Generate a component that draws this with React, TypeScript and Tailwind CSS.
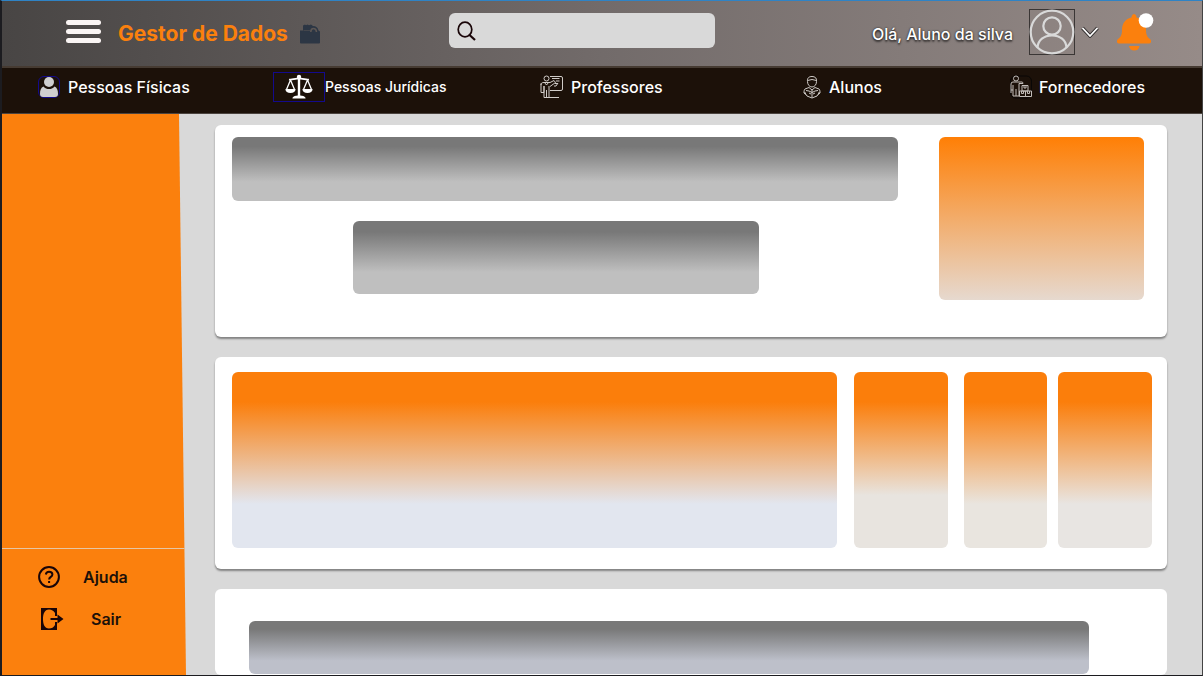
import type { ReactNode } from "react";

function PersonIcon() {
  return (
    <span className="flex h-[22px] w-[22px] shrink-0 rounded-md border border-[#130a8c]">
      <svg viewBox="0 0 20 20" className="h-5 w-5" fill="#cfcfd0" aria-hidden="true">
        <circle cx="10" cy="5" r="5" />
        <path d="M4.500 9.500C6 11.400 8 12 10 12s4-.6 5.500-2.500C18 10.500 19 13 19 17c0 2-1 3-3 3H4c-2 0-3-1-3-3 0-4 1-6.500 3.500-7.500Z" />
      </svg>
    </span>
  );
}

function ScalesIcon() {
  return (
    <span className="flex h-[30px] w-[52px] shrink-0 items-center justify-center border border-[#130a8c]">
      <svg viewBox="0 0 28 26" className="h-[26px] w-7" fill="#fff" aria-hidden="true">
        <circle cx="14" cy="3" r="2.200" />
        <rect x="12.800" y="3" width="2.400" height="20" />
        <path d="M7.500 23.800c1-1.700 3-2 5.300-2.300h2.400c2.300.3 4.300.6 5.300 2.300v.8h-13Z" />
        <path d="M4 5.500c3 .8 5-.8 8-.8h4c3 0 5 1.600 8 .8" fill="none" stroke="#fff" strokeWidth="1.800" />
        <path d="M5.500 6 1.500 15.500M5.500 6l4 9.500M22.500 6l-4 9.500M22.500 6l4 9.500" stroke="#fff" strokeWidth="1.300" />
        <path d="M.4 15h10.200c0 2.500-2.200 4-5.100 4S.4 17.500.4 15ZM17.400 15h10.200c0 2.500-2.200 4-5.100 4s-5.100-1.500-5.100-4Z" />
      </svg>
    </span>
  );
}

function TeacherIcon() {
  return (
    <svg viewBox="0 0 24 24" className="h-6 w-6 shrink-0" fill="none" stroke="#d0ccc8" strokeWidth="1" aria-hidden="true">
      <circle cx="6.500" cy="3.500" r="2.500" />
      <path d="M1 8.500v9h3V11M4 11v11.500h5V11M6.500 15v7.500M1 10C1 8 2 7.500 4 7.500h6l4-2 1.500 2-5.500 4M4.500 7.500l2 2.500 2-2.500" />
      <path d="M10 1.500h11q1.500 0 1.500 1.500v11q0 1.500-1.500 1.500H10M9 22.500h10" />
      <path d="M12 3.500h7.500M16 6h3.500M15 8.500h3M14 11h2l2-3" />
    </svg>
  );
}

function StudentIcon() {
  return (
    <svg viewBox="0 0 18 24" className="h-6 w-[18px] shrink-0" fill="none" stroke="#d0ccc8" strokeWidth="1" aria-hidden="true">
      <path d="M4.500 6.500C4 3 6 1.500 9 1.500s5 1.500 4.500 5c0 3-1.800 5.500-4.500 5.500S4.500 9.500 4.500 6.500ZM4.500 5.500q4.500-2 9 0" />
      <path d="m9 15-3-2.500-4 1.500c-1 1-1 2.500-1 4h2M9 15l3-2.500 4 1.500c1 1 1 2.500 1 4h-2" />
      <path d="M9 15v7.500M3 15.500l3 .5 3 1.500 3-1.500 3-.5M2 18l2 3 5 2 5-2 2-3M1 18l2 1.500M17 18l-2 1.500M6 18l2 1M12 18l-2 1" />
    </svg>
  );
}

function SupplierIcon() {
  return (
    <svg viewBox="0 0 22 24" className="h-6 w-[22px] shrink-0" fill="none" stroke="#c2bdb9" strokeWidth="1" aria-hidden="true">
      <rect x=".5" y="1" width="21" height="22" rx="5" stroke="#090706" />
      <circle cx="6" cy="3.500" r="2.500" />
      <path d="M1 18V9q0-2 2-2h9q1 0 1 1.500H9V21H3V10M6 14v7M1 15h2" />
      <path d="M12 10.500h6V16h-6ZM14 10.500V13h2v-2.500M9.500 16h6v5.500h-6ZM15.500 16h6v5.500h-6ZM11.500 16v2.500h2V16M17.500 16v2.500h2V16" />
    </svg>
  );
}

function FolderIcon() {
  return (
    <svg viewBox="0 0 20 20" className="h-5 w-5 shrink-0" fill="#2c3644" aria-hidden="true">
      <path d="M0 6.500h3V1.500L5 .5l1 .7 1.500-.7 1.500.7L11 .5l2 1.500c3 0 5 1.500 5.500 4.500l1.500 1v11q0 1-1 1H1q-1 0-1-1Z" />
      <path d="M10.800 8q0-3.500 2.700-3.500T16.500 8" fill="none" stroke="#5c5654" strokeWidth="1.500" />
      <path d="M3.500 6.500h7" stroke="#5c5654" strokeWidth=".5" />
    </svg>
  );
}

type Item = { label: string; icon: ReactNode; className: string };

const navItems: Item[] = [
  { label: "Pessoas Físicas", icon: <PersonIcon />, className: "gap-2 text-base" },
  { label: "Pessoas Jurídicas", icon: <ScalesIcon />, className: "text-sm" },
  { label: "Professores", icon: <TeacherIcon />, className: "gap-[7px] text-base" },
  { label: "Alunos", icon: <StudentIcon />, className: "gap-2 text-base" },
  { label: "Fornecedores", icon: <SupplierIcon />, className: "gap-[7px] text-base" },
];

function Header() {
  return (
    <header className="grid h-[65px] grid-cols-[minmax(0,447fr)_minmax(0,266fr)_minmax(0,487fr)] bg-linear-to-r/srgb from-[#484544] via-[#726b6a] to-[#968b88] pb-1">
      <div className="flex items-center pl-16">
        <button type="button" aria-label="Menu" className="flex w-[35px] flex-col gap-1">
          <span className="h-[5px] rounded-full bg-[#faf5f4]" />
          <span className="h-[5px] rounded-full bg-[#faf5f4]" />
          <span className="h-[5px] rounded-full bg-[#faf5f4]" />
        </button>
        <div className="flex items-center gap-3 pl-[17px] pt-1">
          <h1 className="whitespace-nowrap text-[21px] font-bold text-[#fb800d]">Gestor de Dados</h1>
          <FolderIcon />
        </div>
      </div>
      <label className="mt-3 flex h-[35px] items-center rounded-md bg-[#d9d9d9] pl-2">
        <svg viewBox="0 0 20 20" className="h-5 w-5 shrink-0" fill="none" stroke="#190508" aria-hidden="true">
          <ellipse cx="8" cy="8.500" rx="6.800" ry="7.300" strokeWidth="1.700" />
          <path d="m12 13.500 6 5.500" strokeWidth="2.200" />
        </svg>
        <input type="search" aria-label="Pesquisar" className="h-full min-w-0 flex-1 bg-transparent px-2 outline-none" />
      </label>
      <div className="flex items-center justify-end pr-12">
        <span className="mr-4 mt-1 whitespace-nowrap text-base font-medium text-white [text-shadow:0_2px_2px_#0008,0_0_2px_#000c]">
          Olá, Aluno da silva
        </span>
        <button type="button" aria-label="Conta" className="flex items-center">
          <svg viewBox="0 0 46 46" className="h-[46px] w-[46px]" fill="none" stroke="#d9d9d9" strokeWidth="2.200" aria-hidden="true">
            <rect x=".5" y=".5" width="45" height="45" stroke="#3a3635" strokeWidth="1" />
            <circle cx="23" cy="23" r="21.300" />
            <circle cx="23" cy="17" r="8.700" />
            <path d="M8.500 38.500C9 31 15 26.500 23 26.500S37 31 37.500 38.500" />
          </svg>
          <svg viewBox="0 0 18 12" className="ml-1.5 h-3 w-[18px]" fill="none" aria-hidden="true">
            <path d="m1.500 2 7.500 8 7.500-8" stroke="#302d2d" strokeWidth="3.500" />
            <path d="m1.500 2 7.500 8 7.500-8" stroke="#fff" strokeWidth="1.800" />
          </svg>
        </button>
        <button type="button" aria-label="Notificações" className="ml-[18px]">
          <svg viewBox="0 0 37 40" className="h-10 w-[37px]" fill="#fb800d" aria-hidden="true">
            <path d="M14.500 5.500q0-3 2.500-3.500 2.500.500 2.500 3.500c7 1.500 9.500 7 9.500 12.500 0 6 2 7.500 4.500 9.500q1.500 3-1 4h-31q-2.500-1-1-4c2.500-2 4.500-3.500 4.500-9.500 0-5.500 2.500-11 9.500-12.500Z" />
            <path d="M12 34h10.500q-1 4.500-5.250 4.500T12 34Z" />
            <circle cx="29" cy="8.500" r="7.300" fill="#fff" />
          </svg>
        </button>
      </div>
    </header>
  );
}

function Nav() {
  return (
    <nav className="h-12 border-b border-t-2 border-b-[#4b443f] border-t-[#463b32] bg-[#1c1109] pl-9">
      <ul className="grid h-[38px] grid-cols-[235fr_267fr_263fr_207fr_192fr]">
        {navItems.map(({ label, icon, className }) => (
          <li key={label} className="flex items-center">
            <a href="#" className={`flex items-center whitespace-nowrap font-medium text-white ${className}`}>
              {icon}
              {label}
            </a>
          </li>
        ))}
      </ul>
    </nav>
  );
}

function Sidebar() {
  return (
    <aside className="flex w-[184px] shrink-0 flex-col bg-[#fb800d] text-base font-semibold text-[#1c1109] [clip-path:polygon(0_0,177px_0,100%_100%,0_100%)]">
      <div className="mt-auto flex h-[127px] flex-col gap-[18px] border-t border-[#e5c6a5] pl-9 pt-4">
        <a href="#" className="flex items-center">
          <svg viewBox="0 0 22 22" className="h-[22px] w-[22px]" fill="none" stroke="#190508" strokeWidth="2" aria-hidden="true">
            <circle cx="11" cy="11" r="9.900" />
            <path d="M7.800 8.500Q8.300 5.800 11 5.800c2 0 3.400 1 3.400 2.700 0 2.500-3.300 2.300-3.300 5M11.100 15v2" />
          </svg>
          <span className="ml-[23px]">Ajuda</span>
        </a>
        <a href="#" className="flex items-center">
          <svg viewBox="0 0 26 22" className="h-[22px] w-[26px]" fill="#190508" aria-hidden="true">
            <path fillRule="evenodd" d="M3 0h16v8h-2V5Q15 1.500 11 1.500C6.500 1.500 5 6 5 11s1.500 9.500 6 9.500q4 0 6-3.500v-3h2v8H3Z" />
            <path d="M12.500 10h7V6.500l6 4.500-6 4.500V12h-7Z" />
          </svg>
          <span className="ml-[27px]">Sair</span>
        </a>
      </div>
    </aside>
  );
}

export default function App() {
  return (
    <div className="flex min-h-screen flex-col border-b border-l-2 border-r border-t border-b-[#1c1c20] border-l-[#1c1c20] border-r-[#444] border-t-[#2f83c5] bg-[#d9d9d9] font-[Inter,sans-serif]">
      <Header />
      <Nav />
      <div className="flex flex-1 items-stretch">
        <Sidebar />
        <main className="flex min-w-0 flex-1 flex-col gap-5 pl-[29px] pr-[35px] pt-[11px]">
          <section className="flex h-[212px] items-start justify-between rounded-md bg-white pl-[17px] pr-[23px] pt-3 shadow-[0_2px_2px_#0006]">
            <div className="flex w-[73%] flex-col items-center gap-5">
              <div className="h-16 w-full rounded-md bg-linear-to-b/srgb from-[#787878] from-15% to-[#bfbfbf] to-70%" />
              <div className="mr-[18px] h-[73px] w-[61%] rounded-md bg-linear-to-b/srgb from-[#787878] from-15% to-[#bfbfbf] to-70%" />
            </div>
            <div className="h-[163px] w-[22.500%] rounded-md bg-linear-to-b/srgb from-[#ff7f05] to-[#e6d9cf]" />
          </section>
          <section className="grid h-[212px] grid-cols-[622fr_110fr_94fr_94fr] rounded-md bg-white pb-[21px] pl-[17px] pr-[15px] pt-[15px] shadow-[0_2px_2px_#0006]">
            <div className="mr-[17px] rounded-md bg-linear-to-b/srgb from-[#fb7e0b] from-17% to-[#e2e6ef] to-75%" />
            <div className="mr-4 rounded-md bg-linear-to-b/srgb from-[#fb7e0b] from-17% to-[#e8e4df] to-70%" />
            <div className="mr-[11px] rounded-md bg-linear-to-b/srgb from-[#fb7e0b] from-17% to-[#e9e5df] to-75%" />
            <div className="rounded-md bg-linear-to-b/srgb from-[#fb7e0b] from-17% to-[#e8e5e2] to-75%" />
          </section>
          <section className="flex-1 rounded-md bg-white pl-[34px] pt-8">
            <div className="h-[53px] w-[91.500%] rounded-md bg-linear-to-b/srgb from-[#787878] from-15% to-[#bdc0ca] to-75%" />
          </section>
        </main>
      </div>
    </div>
  );
}
